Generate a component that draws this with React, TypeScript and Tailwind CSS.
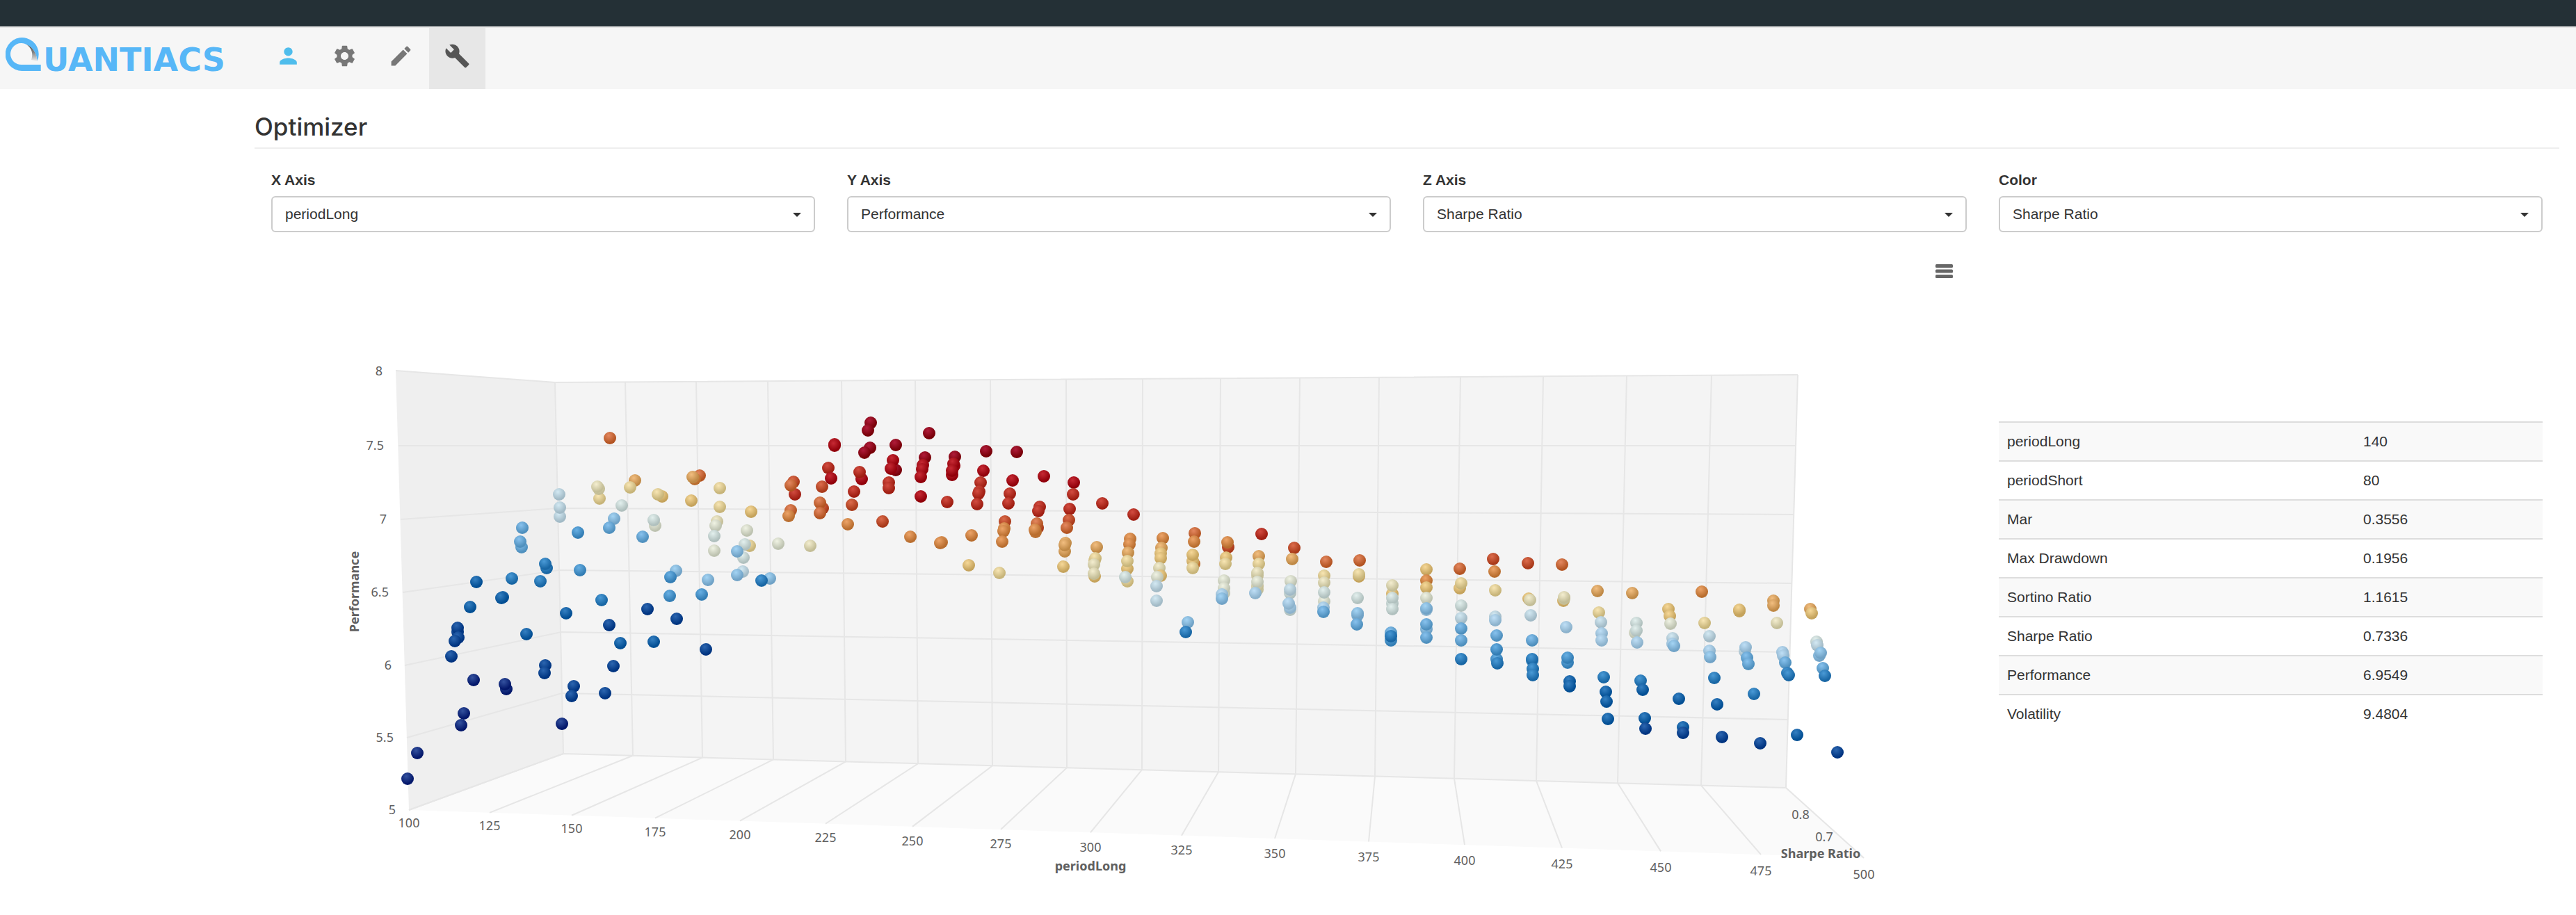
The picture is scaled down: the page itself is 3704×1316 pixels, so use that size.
import {MdBuild, MdEdit, MdPerson, MdSettings} from 'react-icons/md';

type Point = [number, number, string];

// sphere colours, from the lowest ratio (a) to the highest (u): highlight, edge
const palette: Record<string, [string, string]> = {
  a: ['#34529f', '#03176a'],
  b: ['#2c66b0', '#003480'],
  c: ['#3580c2', '#024e93'],
  d: ['#4a9ad6', '#1866a4'],
  e: ['#68b0e4', '#337db4'],
  f: ['#88c2ee', '#4f90be'],
  g: ['#a4d4f4', '#70a2c6'],
  h: ['#bfdff6', '#8cb2cc'],
  i: ['#d3e9f3', '#a2bac6'],
  j: ['#e3f0ee', '#b0c0be'],
  k: ['#f0f3e4', '#bdc2b0'],
  l: ['#f4eed0', '#c3bd96'],
  m: ['#f8e6b4', '#c7b479'],
  n: ['#f6d898', '#c5a35c'],
  o: ['#f2be80', '#bf8946'],
  p: ['#eda468', '#b96e2f'],
  q: ['#e48860', '#b35422'],
  r: ['#dc6c4c', '#a93a1a'],
  s: ['#d24c40', '#9f1e12'],
  t: ['#c62a34', '#91000a'],
  u: ['#b01c3a', '#780008'],
};

const points: Point[] = [
  [877, 630, 'q'], [862, 717, 'm'], [861, 703, 'l'], [859, 700, 'l'], [913, 691, 'o'], [906, 701, 'm'],
  [804, 711, 'i'], [805, 743, 'i'], [805, 730, 'i'], [894, 727, 'j'], [883, 746, 'g'], [876, 759, 'f'],
  [952, 714, 'n'], [946, 711, 'm'], [942, 756, 'k'], [940, 748, 'j'], [831, 766, 'e'], [924, 772, 'f'],
  [751, 759, 'f'], [750, 787, 'f'], [748, 779, 'f'], [786, 817, 'd'], [784, 811, 'd'], [834, 820, 'e'],
  [685, 837, 'c'], [736, 832, 'd'], [777, 836, 'd'], [723, 859, 'c'], [721, 860, 'c'], [676, 873, 'c'],
  [814, 882, 'c'], [865, 863, 'd'], [931, 876, 'b'], [973, 890, 'b'], [876, 899, 'b'], [972, 821, 'g'],
  [964, 830, 'e'], [963, 857, 'e'],
  [658, 909, 'b'], [658, 903, 'b'], [659, 917, 'b'], [654, 922, 'b'], [649, 944, 'b'], [757, 912, 'c'],
  [892, 925, 'c'], [940, 923, 'c'], [1015, 934, 'b'], [681, 978, 'a'], [728, 991, 'a'], [726, 984, 'a'],
  [784, 957, 'b'], [783, 968, 'b'], [882, 958, 'b'], [825, 987, 'b'], [822, 1001, 'b'], [870, 997, 'b'],
  [808, 1041, 'a'], [667, 1026, 'a'], [663, 1043, 'a'], [600, 1083, 'a'], [586, 1120, 'a'],
  [1006, 684, 'q'], [999, 689, 'p'], [996, 686, 'o'], [994, 720, 'n'], [1035, 702, 'm'], [1035, 729, 'm'],
  [1080, 736, 'n'], [1031, 750, 'l'], [1029, 756, 'k'], [1027, 771, 'j'], [1027, 792, 'k'], [1074, 763, 'k'],
  [1078, 785, 'm'], [1071, 783, 'j'], [1069, 802, 'j'], [1060, 793, 'g'], [1068, 822, 'i'], [1060, 827, 'g'],
  [1018, 834, 'g'], [1009, 855, 'e'], [1107, 832, 'g'], [1095, 835, 'd'], [1119, 782, 'k'], [1165, 785, 'l'],
  [1143, 711, 's'], [1141, 693, 'r'], [1137, 698, 'q'], [1137, 734, 'q'], [1134, 742, 'p'], [1200, 639, 't'],
  [1200, 641, 't'], [1191, 673, 's'], [1195, 688, 't'], [1182, 700, 'r'], [1183, 731, 'r'], [1179, 723, 'q'],
  [1179, 738, 'q'], [1252, 608, 'u'], [1248, 619, 'u'], [1251, 644, 'u'], [1243, 651, 'u'], [1239, 689, 't'],
  [1236, 679, 's'], [1228, 707, 's'], [1225, 726, 'r'], [1219, 754, 'p'], [1269, 750, 'r'], [1288, 640, 'u'],
  [1288, 676, 'u'], [1284, 662, 't'], [1281, 674, 't'], [1278, 694, 's'], [1278, 702, 's'], [1336, 623, 'u'],
  [1330, 658, 'u'], [1327, 669, 't'], [1326, 675, 't'], [1324, 686, 't'], [1324, 714, 't'], [1373, 657, 'u'],
  [1372, 670, 't'], [1371, 667, 't'], [1369, 683, 't'], [1369, 677, 't'], [1362, 722, 's'], [1309, 772, 'p'],
  [1354, 780, 'p'], [1352, 781, 'p'], [1397, 770, 'p'], [1393, 813, 'n'], [1437, 824, 'm'], [1418, 649, 'u'],
  [1462, 650, 'u'], [1414, 677, 't'], [1410, 694, 's'], [1408, 707, 's'], [1407, 710, 's'], [1405, 725, 's'],
  [1456, 691, 't'], [1452, 710, 's'], [1450, 724, 's'], [1445, 750, 'r'], [1444, 760, 'p'], [1443, 764, 'p'],
  [1441, 779, 'p'],
  [1501, 685, 't'], [1495, 729, 's'], [1493, 735, 's'], [1492, 759, 'r'], [1491, 753, 'q'], [1489, 765, 'p'],
  [1488, 762, 'p'], [1544, 694, 't'], [1543, 711, 's'], [1538, 732, 's'], [1537, 748, 'r'], [1534, 759, 'q'],
  [1531, 793, 'o'], [1532, 781, 'o'], [1531, 784, 'o'], [1529, 815, 'n'], [1585, 724, 's'], [1630, 740, 's'],
  [1577, 787, 'o'], [1574, 806, 'm'], [1575, 803, 'm'], [1573, 812, 'l'], [1574, 829, 'n'], [1573, 825, 'l'],
  [1625, 775, 'p'], [1624, 783, 'p'], [1622, 795, 'o'], [1621, 818, 'n'], [1621, 807, 'm'], [1621, 836, 'm'],
  [1618, 830, 'j'], [1672, 774, 'p'], [1670, 788, 'o'], [1669, 796, 'n'], [1669, 803, 'n'], [1667, 817, 'l'],
  [1669, 828, 'n'], [1664, 830, 'k'], [1663, 843, 'i'], [1663, 864, 'i'], [1718, 767, 'q'], [1717, 779, 'p'],
  [1717, 811, 'p'], [1715, 807, 'n'], [1715, 798, 'n'], [1715, 817, 'm'], [1708, 895, 'g'], [1705, 909, 'd'],
  [1766, 787, 'r'], [1765, 780, 'p'], [1763, 802, 'n'], [1762, 811, 'm'], [1760, 835, 'k'], [1760, 853, 'k'],
  [1760, 846, 'k'], [1757, 855, 'h'], [1757, 861, 'g'], [1814, 768, 's'], [1810, 800, 'o'], [1810, 811, 'm'],
  [1808, 828, 'l'], [1808, 824, 'l'], [1808, 848, 'l'], [1808, 843, 'l'], [1808, 837, 'k'], [1805, 853, 'h'],
  [1861, 788, 'r'], [1858, 804, 'o'], [1856, 836, 'k'], [1855, 853, 'j'], [1855, 848, 'i'], [1855, 877, 'j'],
  [1855, 874, 'h'], [1853, 868, 'h'], [1907, 808, 'q'], [1904, 828, 'm'], [1904, 838, 'l'], [1904, 865, 'k'],
  [1904, 852, 'j'], [1903, 874, 'h'], [1903, 880, 'f'], [1955, 806, 'q'], [1954, 829, 'n'], [1954, 826, 'm'],
  [1952, 860, 'j'], [1952, 885, 'g'], [1952, 882, 'g'], [1951, 898, 'f'],
  [2002, 854, 'n'], [2002, 842, 'l'], [2002, 868, 'j'], [2002, 860, 'j'], [2002, 876, 'j'], [2000, 910, 'f'],
  [2000, 921, 'e'], [2000, 915, 'd'], [2051, 819, 'n'], [2051, 835, 'p'], [2051, 845, 'n'], [2051, 860, 'k'],
  [2051, 877, 'h'], [2051, 875, 'g'], [2051, 905, 'g'], [2051, 898, 'f'], [2051, 917, 'f'], [2099, 818, 'q'],
  [2099, 846, 'n'], [2101, 839, 'm'], [2101, 871, 'j'], [2101, 889, 'i'], [2101, 904, 'f'], [2101, 921, 'f'],
  [2101, 948, 'd'], [2147, 804, 'r'], [2149, 822, 'p'], [2150, 849, 'm'], [2150, 887, 'i'], [2150, 892, 'h'],
  [2152, 914, 'f'], [2152, 948, 'e'], [2152, 934, 'e'], [2153, 954, 'd'], [2197, 810, 'r'], [2198, 861, 'n'],
  [2200, 863, 'l'], [2201, 885, 'i'], [2203, 921, 'f'], [2203, 950, 'e'], [2203, 948, 'd'], [2204, 962, 'd'],
  [2204, 971, 'd'], [2246, 812, 'q'], [2248, 864, 'n'], [2249, 861, 'l'], [2249, 859, 'l'], [2252, 902, 'h'],
  [2254, 953, 'e'], [2254, 946, 'e'], [2257, 980, 'c'], [2257, 987, 'c'], [2297, 850, 'o'], [2299, 881, 'm'],
  [2302, 895, 'i'], [2303, 911, 'h'], [2303, 921, 'h'], [2306, 974, 'd'], [2309, 995, 'c'], [2310, 1009, 'c'],
  [2312, 1034, 'c'], [2347, 853, 'o'], [2351, 910, 'k'], [2353, 896, 'j'], [2353, 907, 'j'], [2354, 924, 'h'],
  [2359, 979, 'd'], [2362, 992, 'c'], [2365, 1033, 'c'], [2366, 1048, 'b'],
  [2399, 876, 'n'], [2401, 886, 'n'], [2402, 897, 'k'], [2405, 918, 'i'], [2405, 926, 'h'], [2407, 929, 'g'],
  [2414, 1005, 'c'], [2420, 1046, 'c'], [2420, 1054, 'b'], [2447, 851, 'p'], [2451, 896, 'm'], [2458, 915, 'i'],
  [2458, 936, 'h'], [2459, 945, 'g'], [2465, 975, 'd'], [2469, 1013, 'c'], [2476, 1060, 'b'], [2501, 879, 'n'],
  [2501, 877, 'n'], [2509, 937, 'i'], [2510, 931, 'h'], [2512, 946, 'f'], [2514, 955, 'f'], [2522, 998, 'd'],
  [2531, 1069, 'b'], [2550, 864, 'o'], [2550, 871, 'o'], [2555, 896, 'l'], [2563, 938, 'h'], [2564, 943, 'h'],
  [2567, 953, 'f'], [2570, 968, 'd'], [2572, 971, 'd'], [2584, 1057, 'c'], [2603, 876, 'o'], [2605, 882, 'n'],
  [2612, 923, 'j'], [2613, 928, 'i'], [2616, 943, 'g'], [2618, 939, 'g'], [2621, 961, 'f'], [2624, 972, 'd'],
  [2642, 1082, 'b'],
];

// x of each tick at the top of the back wall, at its foot, and at the front of the floor
const xTicks = [
  {label: '100', top: 798, foot: 810, front: 588},
  {label: '125', top: 899, foot: 910, front: 704},
  {label: '150', top: 1001, foot: 1010, front: 822},
  {label: '175', top: 1104, foot: 1112, front: 942},
  {label: '200', top: 1210, foot: 1216, front: 1064},
  {label: '225', top: 1316, foot: 1320, front: 1187},
  {label: '250', top: 1424, foot: 1427, front: 1312},
  {label: '275', top: 1533, foot: 1534, front: 1439},
  {label: '300', top: 1643, foot: 1642, front: 1568},
  {label: '325', top: 1755, foot: 1752, front: 1699},
  {label: '350', top: 1869, foot: 1863, front: 1833},
  {label: '375', top: 1983, foot: 1977, front: 1968},
  {label: '400', top: 2100, foot: 2091, front: 2106},
  {label: '425', top: 2219, foot: 2209, front: 2246},
  {label: '450', top: 2339, foot: 2326, front: 2388},
  {label: '475', top: 2461, foot: 2446, front: 2532},
  {label: '500', top: 2585, foot: 2568, front: 2680},
];

const yTicks = [
  {label: '8', x: 550, y: 540, line: '569,533 798,550 2585,539'},
  {label: '7.5', x: 552, y: 647, line: '573,641 800,641 2582,641'},
  {label: '7', x: 556, y: 753, line: '576,747 802,731 2579,740'},
  {label: '6.5', x: 559, y: 858, line: '579,852 804,820 2576,839'},
  {label: '6', x: 563, y: 963, line: '582,957 807,909 2573,938'},
  {label: '5.5', x: 566, y: 1067, line: '585,1061 808,997 2571,1035'},
  {label: '5', x: 569, y: 1171, line: '588,1165 810,1084 2568,1133'},
];

const fields = [
  {id: 'x-axis', label: 'X Axis', value: 'periodLong'},
  {id: 'y-axis', label: 'Y Axis', value: 'Performance'},
  {id: 'z-axis', label: 'Z Axis', value: 'Sharpe Ratio'},
  {id: 'color', label: 'Color', value: 'Sharpe Ratio'},
];

const stats = [
  ['periodLong', '140'],
  ['periodShort', '80'],
  ['Mar', '0.3556'],
  ['Max Drawdown', '0.1956'],
  ['Sortino Ratio', '1.1615'],
  ['Sharpe Ratio', '0.7336'],
  ['Performance', '6.9549'],
  ['Volatility', '9.4804'],
];

const options = stats.map(([name]) => name);

const topY = (x: number) => 550 - ((x - 798) * 11) / 1787;
const footY = (x: number) => 1084 + ((x - 810) * 49) / 1758;
const frontY = (x: number) => 1165 + ((x - 588) * 69) / 2092;

function Logo() {
  return (
    <svg viewBox="0 0 366 72" className="h-[72px] w-[366px]" role="img" aria-label="Quantiacs">
      <defs>
        <linearGradient id="logoShade" x1="0" y1="0" x2="0" y2="1">
          <stop offset="0" stopColor="#444" />
          <stop offset="0.5" stopColor="#888" />
          <stop offset="1" stopColor="#eee" />
        </linearGradient>
      </defs>
      <g transform="translate(0 4)">
        <path
          d="M50.700 48H24A24 24 0 1 1 45.500 34C45 24 40 14 30 10A15.500 15.500 0 1 0 24 39H50.700Z"
          fill="#57b7f7"
        />
        <path d="M30 10C40 14 45 24 45.500 34L37 32C40 24 38 15 30 10Z" fill="url(#logoShade)" />
      </g>
      <text x="54" y="52" fontFamily="DejaVu Sans, sans-serif" fontSize="46" fontWeight="700" fill="#57b7f7">
        UANTIACS
      </text>
    </svg>
  );
}

function Header() {
  return (
    <header>
      <div className="h-[38px] bg-[#243036]" />
      <nav className="flex h-[90px] border-t-2 border-[#e7e7e7] bg-[#f6f6f6] pl-2">
        <a href="#" className="mt-[10px]">
          <Logo />
        </a>
        <a href="#" aria-label="Account" className="flex w-[81px] justify-center pt-[22px] text-[#4fbdec]">
          <MdPerson size={37} />
        </a>
        <a href="#" aria-label="Settings" className="flex w-[81px] justify-center pt-[22px] text-[#777]">
          <MdSettings size={37} />
        </a>
        <a href="#" aria-label="Editor" className="flex w-[81px] justify-center pt-[22px] text-[#777]">
          <MdEdit size={37} />
        </a>
        <a href="#" aria-label="Optimizer" className="flex w-[81px] justify-center bg-[#e7e7e7] pt-[22px] text-[#555]">
          <MdBuild size={37} />
        </a>
      </nav>
    </header>
  );
}

function Chart() {
  return (
    <svg viewBox="390 350 2438 950" className="block w-full" fontFamily="Noto Sans, sans-serif" fontSize="18" fill="#606060">
      <defs>
        {Object.entries(palette).map(([key, [light, dark]]) => (
          <radialGradient key={key} id={`ball-${key}`} cx="0.4" cy="0.3" r="0.6">
            <stop offset="0" stopColor={light} />
            <stop offset="1" stopColor={dark} />
          </radialGradient>
        ))}
      </defs>
      <polygon points="588,1165 810,1084 2568,1133 2680,1234" fill="#fafafa" />
      <polygon points="569,533 798,550 810,1084 588,1165" fill="#efefef" />
      <polygon points="798,550 2585,539 2568,1133 810,1084" fill="#f4f4f4" />
      <g stroke="#e6e6e6" strokeWidth="2" fill="none">
        {yTicks.map((t) => (
          <polyline key={t.label} points={t.line} />
        ))}
        {xTicks.map((t) => (
          <polyline
            key={t.label}
            points={`${t.top},${topY(t.top)} ${t.foot},${footY(t.foot)} ${t.front},${frontY(t.front)}`}
          />
        ))}
      </g>
      {points.map(([x, y, c], i) => (
        <circle key={i} cx={x} cy={y} r="9" fill={`url(#ball-${c})`} />
      ))}
      {yTicks.map((t) => (
        <text key={t.label} x={t.x} y={t.y} textAnchor="end">
          {t.label}
        </text>
      ))}
      {xTicks.map((t) => (
        <text key={t.label} x={t.front} y={1190 + ((t.front - 588) * 74) / 2092} textAnchor="middle">
          {t.label}
        </text>
      ))}
      <text x="2589" y="1178" textAnchor="middle">0.8</text>
      <text x="2623" y="1210" textAnchor="middle">0.7</text>
      <g fontWeight="700" textAnchor="middle">
        <text x="1568" y="1252">periodLong</text>
        <text x="2618" y="1234">Sharpe Ratio</text>
        <text transform="translate(516 851) rotate(-90)">Performance</text>
      </g>
    </svg>
  );
}

function App() {
  return (
    <div className="min-h-screen bg-white font-['Liberation_Sans',Arial,sans-serif] text-[21px] leading-[30px] text-[#333]">
      <Header />
      <main className="pt-[34px] pr-6 pl-[366px]">
        <h1 className="border-b-2 border-[#eee] pb-[10px] font-['Inter',sans-serif] text-[35px] leading-[40px] font-medium">
          Optimizer
        </h1>
        <div className="mt-[30px] grid grid-cols-4 gap-x-[46px] px-6">
          {fields.map((f) => (
            <div key={f.id}>
              <label htmlFor={f.id} className="mb-2 block font-bold">
                {f.label}
              </label>
              <div className="relative">
                <select
                  id={f.id}
                  defaultValue={f.value}
                  className="h-[52px] w-full appearance-none rounded-md border-2 border-[#ccc] bg-white px-[18px]"
                >
                  {options.map((o) => (
                    <option key={o}>{o}</option>
                  ))}
                </select>
                <svg
                  viewBox="0 0 12 6"
                  className="pointer-events-none absolute top-6 right-5 h-[6px] w-[12px]"
                  fill="#333"
                >
                  <path d="M0 0H12L6 6Z" />
                </svg>
              </div>
            </div>
          ))}
          <div className="relative col-span-3 mt-4">
            <Chart />
            <button type="button" aria-label="Chart menu" className="absolute top-[30px] right-5">
              <svg viewBox="0 0 25 20" className="block h-[20px] w-[25px]" fill="#666">
                <rect width="25" height="5" rx="1.500" />
                <rect y="7.500" width="25" height="5" rx="1.500" />
                <rect y="15" width="25" height="5" rx="1.500" />
              </svg>
            </button>
          </div>
          <div className="pt-[272px]">
            <table className="w-full border-collapse text-left">
              <tbody>
                {stats.map(([name, value]) => (
                  <tr key={name} className="border-t-2 border-[#ddd] odd:bg-[#f9f9f9]">
                    <th scope="row" className="w-[512px] p-3 font-normal">
                      {name}
                    </th>
                    <td className="p-3">{value}</td>
                  </tr>
                ))}
              </tbody>
            </table>
          </div>
        </div>
      </main>
    </div>
  );
}

export default App;
